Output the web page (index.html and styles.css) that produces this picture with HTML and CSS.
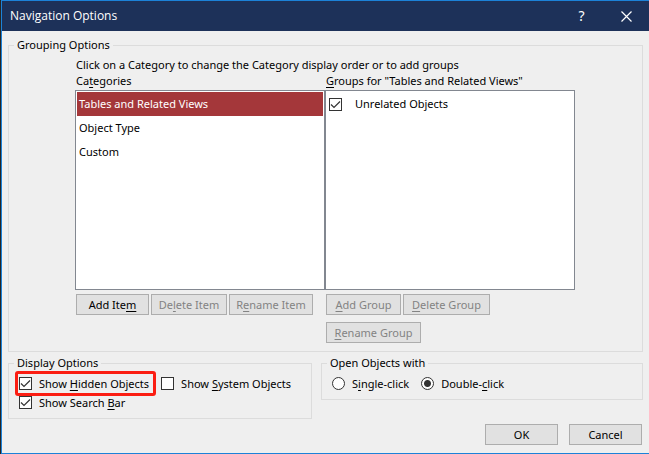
FILE: index.html
```html
<!DOCTYPE html>
<html lang="en">
<head>
<meta charset="utf-8">
<title>Navigation Options</title>
<link rel="stylesheet" href="styles.css">
</head>
<body>
<form class="dialog">
  <header class="titlebar">
    <h1 class="title">Navigation Options</h1>
    <button type="button" class="title-button help" aria-label="Help">?</button>
    <button type="button" class="title-button" aria-label="Close">
      <svg width="11" height="11" viewBox="0 0 11 11" aria-hidden="true"><path d="M.5.5l10 10M10.5.5l-10 10" fill="none" stroke="#fff" stroke-width="1.2"/></svg>
    </button>
  </header>
  <main class="content">
    <fieldset class="group">
      <legend>Grouping Options</legend>
      <div class="grouping">
        <p class="hint">Click on a Category to change the Category display order or to add groups</p>
        <div class="columns">
          <section class="column">
            <h2 class="list-label">Ca<u>t</u>egories</h2>
            <ul class="list">
              <li class="row selected">Tables and Related Views</li>
              <li class="row">Object Type</li>
              <li class="row">Custom</li>
            </ul>
            <div class="actions">
              <button type="button" class="button add-item">Add Ite<u>m</u></button>
              <button type="button" class="button delete-item" disabled>De<u>l</u>ete Item</button>
              <button type="button" class="button rename-item" disabled>R<u>e</u>name Item</button>
            </div>
          </section>
          <section class="column">
            <h2 class="list-label"><u>G</u>roups for "Tables and Related Views"</h2>
            <ul class="list">
              <li class="row"><label class="option wide"><input type="checkbox" class="check" checked><span>Unrelated Objects</span></label></li>
            </ul>
            <div class="actions">
              <button type="button" class="button add-group" disabled><u>A</u>dd Group</button>
              <button type="button" class="button delete-group" disabled><u>D</u>elete Group</button>
              <button type="button" class="button rename-group" disabled><u>R</u>ename Group</button>
            </div>
          </section>
        </div>
      </div>
    </fieldset>
    <div class="lower">
      <fieldset class="group">
        <legend>Display Options</legend>
        <div class="choices">
          <div class="options">
            <label class="option highlighted"><input type="checkbox" class="check" checked><span>Show <u>H</u>idden Objects</span></label>
            <label class="option"><input type="checkbox" class="check"><span>Show <u>S</u>ystem Objects</span></label>
          </div>
          <div class="options">
            <label class="option"><input type="checkbox" class="check" checked><span>Show Search <u>B</u>ar</span></label>
          </div>
        </div>
      </fieldset>
      <fieldset class="group">
        <legend>Open Objects with</legend>
        <div class="choices">
          <div class="options">
            <label class="option"><input type="radio" name="open" class="radio"><span>S<u>i</u>ngle-click</span></label>
            <label class="option"><input type="radio" name="open" class="radio" checked><span>Double-<u>c</u>lick</span></label>
          </div>
        </div>
      </fieldset>
    </div>
    <footer class="footer">
      <button type="submit" class="button confirm">OK</button>
      <button type="button" class="button confirm">Cancel</button>
    </footer>
  </main>
</form>
</body>
</html>
```
FILE: styles.css
```css
* {
  box-sizing: border-box;
}

body {
  margin: 0;
  background: #efefef;
  border-left: 1px solid #252525;
  color: #000;
  font: 11px/16px "Noto Sans", "Open Sans", sans-serif;
}

button,
input {
  font: inherit;
}

u {
  text-underline-offset: 2px;
  text-decoration-skip-ink: none;
}

.dialog {
  min-height: 100vh;
  background: #efefef;
  border: 1px solid #1c82d8;
  border-right: 0;
}

.titlebar {
  display: flex;
  align-items: center;
  height: 30px;
  padding-left: 8px;
  background: #1d3159;
  color: #fff;
}

.title {
  flex: 1;
  margin: 0;
  font-family: "Open Sans", sans-serif;
  font-size: 12px;
  font-weight: 400;
}

.title-button {
  display: flex;
  align-items: center;
  justify-content: center;
  width: 45px;
  height: 30px;
  padding: 0;
  border: 0;
  background: none;
  color: #fff;
}

.help {
  font-size: 14px;
}

.content {
  padding: 6px 6px 8px;
}

.group {
  min-width: 0;
  margin: 0;
  padding: 0;
  border: 1px solid #dcdcdc;
}

.group legend {
  margin-left: 5px;
  padding: 0 3px;
}

.grouping {
  padding: 4px 67px 8px 66px;
}

.hint {
  margin: 0 0 0 1px;
}

.columns {
  display: grid;
  grid-template-columns: 1fr 1fr;
}

.list-label {
  margin: 0 0 1px 1px;
  font-size: 11px;
  font-weight: 400;
}

.list {
  height: 200px;
  margin: 0;
  padding: 1px;
  border: 1px solid #828790;
  background: #fff;
  list-style: none;
}

.row {
  height: 24px;
  padding: 0 2px;
  line-height: 24px;
}

.selected {
  background: #a4373a;
  color: #fff;
}

.actions {
  display: flex;
  flex-wrap: wrap;
  gap: 7px 2px;
  padding: 4px 0 0 1px;
}

.button {
  height: 21px;
  padding: 0;
  border: 1px solid #adadad;
  background: #e1e1e1;
  color: #000;
  line-height: 19px;
}

.button:disabled {
  color: #838383;
}

.add-item {
  width: 73px;
}

.delete-item {
  width: 76px;
}

.rename-item {
  width: 84px;
}

.add-group {
  width: 75px;
}

.delete-group {
  width: 87px;
}

.rename-group {
  width: 95px;
}

.lower {
  display: grid;
  grid-template-columns: 304fr 322fr;
  align-items: start;
  gap: 9px;
  margin-top: 3px;
}

.choices {
  padding: 3px 10px 6px;
}

.options {
  display: flex;
  gap: 12px;
}

.option {
  position: relative;
  display: flex;
  align-items: center;
  gap: 7px;
  height: 19px;
  white-space: nowrap;
}

.wide {
  gap: 13px;
  height: 24px;
}

.highlighted::after {
  position: absolute;
  inset: -3px -7px -3px -4px;
  border: 3px solid #fb1d12;
  border-radius: 3px;
  content: "";
}

.check,
.radio {
  flex: none;
  width: 13px;
  height: 13px;
  margin: 0;
  border: 1px solid #333;
  background: #fff;
  appearance: none;
}

.check:checked {
  background: #fff url("data:image/svg+xml,%3Csvg xmlns='http://www.w3.org/2000/svg' viewBox='0 0 11 11'%3E%3Cpath d='M1 5.5l3 3 6-6' fill='none' stroke='%23333' stroke-width='1.2'/%3E%3C/svg%3E") center / 11px 11px;
}

.radio {
  border-radius: 50%;
}

.radio:checked {
  background: radial-gradient(circle, #333 3px, #fff 4px);
}

.footer {
  display: flex;
  justify-content: flex-end;
  gap: 11px;
  padding: 5px 1px 0 0;
}

.confirm {
  width: 73px;
}
```
